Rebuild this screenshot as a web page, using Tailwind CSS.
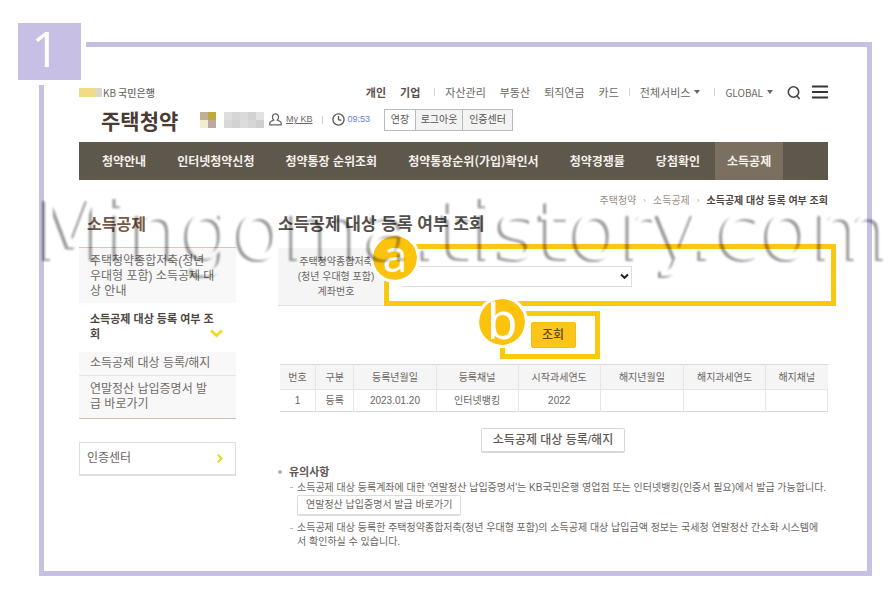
<!DOCTYPE html>
<html lang="ko">
<head>
<meta charset="utf-8">
<meta name="viewport" content="width=device-width, initial-scale=1">
<title>주택청약 - 소득공제 대상 등록 여부 조회</title>
<script src="https://cdn.jsdelivr.net/npm/@tailwindcss/browser@4"></script>
</head>
<body class="bg-white font-['Liberation_Sans','Noto_Sans_CJK_KR',sans-serif] text-[10px] leading-[15px] text-[#6b6663]">
<div class="relative flex min-h-screen flex-col overflow-hidden pt-[42px] pr-[21px] pb-[22px] pl-[39px]">
  <div class="absolute top-[23px] left-[18px] flex h-[57px] w-[63px] justify-center bg-[#c7c0e4] pr-2 font-['Open_Sans',sans-serif] text-[50px] leading-[50px] text-white outline-5 outline-white">1</div>

  <div class="flex-1 border-5 border-[#c7c0e4] pt-[35px] pr-[39px] pl-[35px]">
    <header>
      <div class="flex h-5 items-center">
        <a href="#" class="flex items-center font-['Noto_Sans_CJK_KR',sans-serif] text-[#6b6360]">
          <span class="h-[9px] w-4 bg-[#f1dc86]"></span><span class="mr-px h-[9px] w-[7px] bg-[#dcd8c8]"></span>
          <span class="mr-[2px] text-[10px]">KB</span><span class="font-medium">국민은행</span>
        </a>
        <nav aria-label="서비스" class="ml-auto flex items-center gap-[14px] font-['Noto_Sans_CJK_KR',sans-serif] text-[11px]">
          <a href="#" class="font-bold text-[#5b5049]">개인</a>
          <a href="#" class="font-bold text-[#5b5049]">기업</a>
          <span class="flex items-center gap-[10px]"><i class="h-2 w-px bg-[#d5d5d5]"></i><a href="#">자산관리</a></span>
          <a href="#">부동산</a>
          <a href="#">퇴직연금</a>
          <span class="flex items-center gap-[10px]"><a href="#">카드</a><i class="h-2 w-px bg-[#d5d5d5]"></i>
          <a href="#" class="flex items-center gap-1">전체서비스<svg width="6" height="4" viewBox="0 0 6 4" fill="#666"><path d="M0 0h6L3 4z"/></svg></a></span>
          <span class="flex items-center gap-[10px]"><i class="h-2 w-px bg-[#d5d5d5]"></i>
          <a href="#" class="flex items-center gap-1 text-[10px]">GLOBAL<svg width="6" height="4" viewBox="0 0 6 4" fill="#666"><path d="M0 0h6L3 4z"/></svg></a></span>
          <button aria-label="검색" class="-mr-1"><svg width="15" height="15" viewBox="0 0 15 15" fill="none" stroke="#4a4644" stroke-width="1.6"><circle cx="6.500" cy="7" r="5.2"/><path d="M9.500 10.500l3.200 3.500"/></svg></button>
          <button aria-label="메뉴"><svg width="16" height="14" viewBox="0 0 16 14" stroke="#3a3635" stroke-width="2"><path d="M0 1.500h16M0 7h16M0 12.500h16"/></svg></button>
        </nav>
      </div>
      <div class="flex h-[35px] items-center pl-[22px]">
        <h1 class="w-[99px] font-['Noto_Sans_CJK_KR',sans-serif] text-[21px] leading-[30px] font-bold text-[#4a3b35]">주택청약</h1>
        <div class="grid w-4 grid-cols-2">
          <i class="h-2 bg-[#bfb196]"></i><i class="h-2 bg-[#bfa93c]"></i><i class="h-2 bg-[#f3ecd2]"></i><i class="h-2 bg-[#bcaaa2]"></i>
        </div>
        <div class="ml-2 grid w-10 grid-cols-5">
          <i class="h-2 bg-[#dedede]"></i><i class="h-2 bg-[#d6d6d6]"></i><i class="h-2 bg-[#dadada]"></i><i class="h-2 bg-[#d2d2d2]"></i><i class="h-2 bg-[#e2e2e2]"></i>
          <i class="h-2 bg-[#d8d8d8]"></i><i class="h-2 bg-[#d2d2d2]"></i><i class="h-2 bg-[#dcdcdc]"></i><i class="h-2 bg-[#d6d6d6]"></i><i class="h-2 bg-[#cfcfcf]"></i>
        </div>
        <svg class="ml-[5px]" width="13" height="13" viewBox="0 0 13 13" fill="none" stroke="#666" stroke-width="1.3"><path d="M4.700 7C3.600 6 3.300 4.600 3.500 3.400 3.800 1.700 5 .8 6.500.8s2.700.9 3 2.600c.2 1.200-.1 2.600-1.200 3.600l3 1.500c.6.400.9.900.9 1.700v1.700H.8v-1.700c0-.8.3-1.300.9-1.700z"/></svg>
        <a href="#" class="ml-1 text-[9px] underline">My KB</a>
        <i class="mr-[9px] ml-[9px] h-2 w-px bg-[#d5d5d5]"></i>
        <svg width="13" height="13" viewBox="0 0 13 13" fill="none" stroke="#555" stroke-width="1.3"><circle cx="6.500" cy="6.500" r="5.600"/><path d="M6.500 3v3.700l2.800.7"/></svg>
        <span class="mr-[14px] ml-[3px] text-[9px] text-[#5e83d6]">09:53</span>
        <div class="flex h-[22px] divide-x divide-[#bbb] border border-[#bbb] text-[#555]">
          <button class="w-[31px]">연장</button>
          <button class="w-[47px] bg-[#f3f3f3]">로그아웃</button>
          <button class="w-[49px] bg-[#f3f3f3]">인증센터</button>
        </div>
      </div>
      <nav aria-label="주 메뉴" class="mt-[5px] flex h-[38px] items-center gap-[31px] bg-[#5e574b] pl-[23px] font-['Noto_Sans_CJK_KR',sans-serif] text-xs font-bold whitespace-nowrap text-[#f3f0ea]">
        <a href="#">청약안내</a>
        <a href="#">인터넷청약신청</a>
        <a href="#">청약통장 순위조회</a>
        <a href="#">청약통장순위(가입)확인서</a>
        <a href="#">청약경쟁률</a>
        <a href="#">당첨확인</a>
        <a href="#" class="-ml-4 flex h-full items-center bg-[#7b705f] px-3">소득공제</a>
      </nav>
      <nav aria-label="현재 위치" class="mt-[10px] flex h-5 items-center justify-end gap-[7px]">
        <a href="#" class="text-[#9a908a]">주택청약</a><span class="text-[8px] text-[#b5a59a]">›</span>
        <a href="#" class="text-[#9a908a]">소득공제</a><span class="text-[8px] text-[#b5a59a]">›</span>
        <strong class="text-[#4d4744]">소득공제 대상 등록 여부 조회</strong>
      </nav>
    </header>

    <div class="grid grid-cols-[157px_minmax(0,1fr)] gap-[42px]">
      <aside>
        <h2 class="h-[37px] pl-2 text-base leading-[30px] font-bold text-[#75594b]">소득공제</h2>
        <ul class="border-t border-b border-t-[#d9c6b4] border-b-[#c9bfb6] text-[12px] leading-[15px] text-[#706a67]">
          <li class="bg-[#f8f8f8] pt-[6px] pr-5 pb-1 pl-[11px]"><a href="#">주택청약종합저축(청년<br>우대형 포함) 소득공제 대<br>상 안내</a></li>
          <li class="flex items-center pt-[9px] pr-3 pb-[10px] pl-[11px] text-[11px] font-bold text-[#4d4744]"><a href="#" class="whitespace-nowrap">소득공제 대상 등록 여부 조<br>회</a>
            <svg class="mt-3 -ml-1 shrink-0" width="13" height="9" viewBox="0 0 13 9" fill="none" stroke="#f0dc28" stroke-width="3"><path d="M1 1.500l5.500 5L12 1.500"/></svg></li>
          <li class="border-b border-[#e5e5e5] bg-[#f8f8f8] py-1 pl-[11px]"><a href="#">소득공제 대상 등록/해지</a></li>
          <li class="bg-[#f8f8f8] pt-[6px] pb-[6px] pl-[11px]"><a href="#">연말정산 납입증명서 발<br>급 바로가기</a></li>
        </ul>
        <a href="#" class="mt-[23px] flex h-[34px] items-center justify-between border border-b-2 border-[#dedede] pr-3 pl-[7px] text-[12px]">인증센터
          <svg width="6" height="9" viewBox="0 0 6 9" fill="none" stroke="#ead51f" stroke-width="2"><path d="M1 .8l3.500 3.700L1 8.200"/></svg></a>
      </aside>

      <main>
        <h2 class="h-[37px] text-[17px] leading-[30px] font-bold text-[#55504d]">소득공제 대상 등록 여부 조회</h2>
        <form class="mt-px">
          <div class="relative flex h-[58px] items-center border-b border-[#e0e0e0]">
            <label for="account" class="flex h-full w-[108px] items-center justify-center bg-[#f5f5f5] pl-2 text-center leading-[15px]">주택청약종합저축<br>(청년 우대형 포함)<br>계좌번호</label>
            <div class="relative ml-4 w-[230px]">
              <select id="account" class="block h-[21px] w-full appearance-none border border-l-0 border-[#ddd] bg-white"><option></option></select>
              <svg class="pointer-events-none absolute top-[7px] right-[3px]" width="9" height="7" viewBox="0 0 9 7" fill="none" stroke="#222" stroke-width="2"><path d="M1 1.500l3.500 3.300L8 1.500"/></svg>
            </div>
            <div class="pointer-events-none absolute -top-1 -right-2 left-[106px] h-[62px] border-5 border-[#f8c911]"></div>
            <div class="absolute -top-3 left-[95px] size-11 rounded-full bg-[#fcc30d] text-center font-['Noto_Sans',sans-serif] text-[44px] leading-[38px] text-white outline-3 outline-white">a</div>
          </div>
          <div class="relative flex h-[58px] justify-center pt-[16px]">
            <button type="button" class="h-[26px] w-[45px] rounded-xs border border-[#f2be10] bg-[#fcc51b] text-[12px] font-medium text-[#5b4a1c]">조회</button>
            <div class="pointer-events-none absolute top-[5px] left-1/2 -ml-[53px] h-12 w-[100px] border-5 border-[#f8c911]"></div>
            <div class="absolute -top-[7px] left-1/2 -ml-[74px] size-[46px] rounded-full bg-[#fcc30d] text-center font-['Noto_Sans',sans-serif] text-[50px] leading-[42px] text-white outline-3 outline-white">b</div>
          </div>
        </form>
        <table class="ml-[2px] w-[calc(100%-2px)] table-fixed border-t border-b border-[#d9d9d9] text-center">
          <colgroup><col class="w-[6.500%]"><col class="w-[7%]"><col class="w-[15%]"><col class="w-[15%]"><col class="w-[15%]"><col class="w-[15.200%]"><col class="w-[15%]"><col></colgroup>
          <thead class="bg-[#f5f5f5]">
            <tr class="h-[25px] divide-x divide-[#e5e5e5] border-b border-[#e5e5e5]"><th class="font-normal">번호</th><th class="font-normal">구분</th><th class="font-normal">등록년월일</th><th class="font-normal">등록채널</th><th class="font-normal">시작과세연도</th><th class="font-normal">해지년월일</th><th class="font-normal">해지과세연도</th><th class="font-normal">해지채널</th></tr>
          </thead>
          <tbody>
            <tr class="h-[22px] divide-x divide-[#e5e5e5] border-r border-[#e5e5e5]"><td>1</td><td>등록</td><td>2023.01.20</td><td>인터넷뱅킹</td><td>2022</td><td></td><td></td><td></td></tr>
          </tbody>
        </table>
        <div class="mt-4 flex justify-center">
          <button class="h-[25px] rounded-xs border border-b-2 border-[#d8d8d8] px-[11px] text-[12px] font-medium text-[#5f5a57]">소득공제 대상 등록/해지</button>
        </div>
        <section class="mt-[11px]">
          <h3 class="flex items-center gap-[7px] text-[11px] leading-4 font-bold text-[#5f5a57]"><i class="size-1 rounded-full bg-[#b5b0ad]"></i>유의사항</h3>
          <ul class="pl-[19px] leading-[14px] whitespace-nowrap">
            <li class="relative pt-px"><i class="absolute top-[7px] -left-[7px] h-px w-[3px] bg-[#bbb]"></i>소득공제 대상 등록계좌에 대한 '연말정산 납입증명서'는 KB국민은행 영업점 또는 인터넷뱅킹(인증서 필요)에서 발급 가능합니다.<br>
              <button class="h-[21px] rounded-xs border border-b-2 border-[#dcdcdc] px-2 text-[10px] leading-4">연말정산 납입증명서 발급 바로가기</button></li>
            <li class="relative mt-[5px]"><i class="absolute top-[7px] -left-[7px] h-px w-[3px] bg-[#bbb]"></i>소득공제 대상 등록한 주택청약종합저축(청년 우대형 포함)의 소득공제 대상 납입금액 정보는 국세청 연말정산 간소화 시스템에<br>서 확인하실 수 있습니다.</li>
          </ul>
        </section>
      </main>
    </div>
  </div>

  <!-- Embossed watermark: only the lower-left edges of the letters are shaded -->
  <svg class="absolute size-0" aria-hidden="true">
    <filter id="emboss" x="-5%" y="-20%" width="110%" height="140%" color-interpolation-filters="sRGB">
      <feOffset in="SourceAlpha" dx="3" dy="-2" result="moved"/>
      <feComposite in="SourceAlpha" in2="moved" operator="out"/>
      <feGaussianBlur stdDeviation="0.9"/>
    </filter>
  </svg>
  <div class="pointer-events-none absolute top-[185px] left-[34px] font-['DejaVu_Sans',sans-serif] text-[82px] leading-[96px] whitespace-nowrap text-black opacity-40 [filter:url(#emboss)]">Mingoma.tistory.com</div>
</div>
</body>
</html>
